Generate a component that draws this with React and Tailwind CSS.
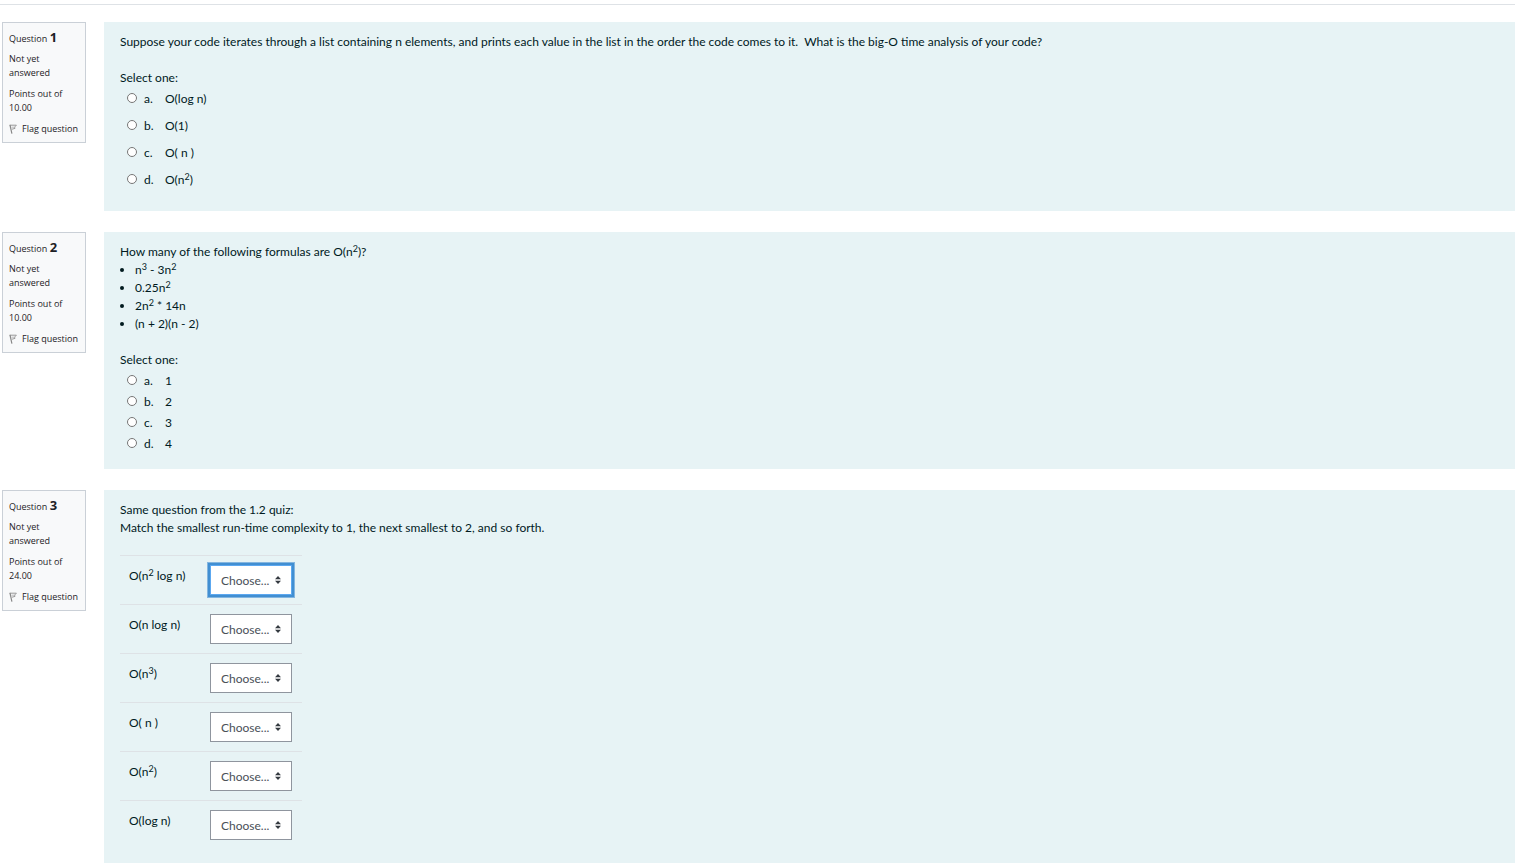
import clsx from "clsx";

const choices = [
  { letter: "a.", key: "a" },
  { letter: "b.", key: "b" },
  { letter: "c.", key: "c" },
  { letter: "d.", key: "d" },
];

function Sup({ children }) {
  return (
    <sup className="relative -top-1 align-baseline text-[9px] leading-none">
      {children}
    </sup>
  );
}

function FlagIcon() {
  return (
    <svg width="8" height="10" viewBox="0 0 8 10" fill="none" aria-hidden="true">
      <path d="M0.5 1.2 H7.4 L5.6 3 L6 4.4 L3 5.2" stroke="#999" />
      <path d="M1 1 L2.9 9.6" stroke="#888" strokeWidth="1.2" />
      <path d="M2.6 3.2 H5" stroke="#bbb" />
    </svg>
  );
}

function QuestionInfo({ number, points }) {
  return (
    <div className="w-[84px] shrink-0 border border-[#cad0d7] bg-[#f8f9fa] px-[6px] pt-[5px] pb-[6px] font-['Open_Sans','Noto_Sans',sans-serif] text-[9px] leading-[14px] text-[#1d2125]">
      <h3 className="mb-1 leading-[18px]">
        Question <span className="text-[13px] font-bold">{number}</span>
      </h3>
      <div className="mb-[7px]">
        Not yet
        <br />
        answered
      </div>
      <div className="mb-[7px]">
        Points out of
        <br />
        {points}
      </div>
      <button type="button" className="flex items-center gap-[5px] whitespace-nowrap">
        <FlagIcon />
        Flag question
      </button>
    </div>
  );
}

function Question({ number, points, children }) {
  return (
    <section className="mb-[21px] flex items-start gap-[18px] pl-[2px]">
      <QuestionInfo number={number} points={points} />
      <div className="min-w-0 flex-1 bg-[#e7f3f5] px-4 pt-[11px] text-[#001a1e]">
        {children}
      </div>
    </section>
  );
}

function Options({ name, answers, rowClass }) {
  return (
    <fieldset className="mt-[18px] mb-[13px]">
      <legend className="mb-[3px]">Select one:</legend>
      {choices.map(({ letter, key }, index) => (
        <div key={key} className={clsx("flex items-start pl-[7px]", rowClass)}>
          <input
            type="radio"
            id={`${name}-${key}`}
            name={name}
            className="mt-[3px] size-[10px] shrink-0 appearance-none rounded-full border border-[#767676] bg-white checked:bg-[#0f6fc5]"
          />
          <label htmlFor={`${name}-${key}`} className="ml-[7px] flex">
            <span className="w-[21px]">{letter}</span>
            <span>{answers[index]}</span>
          </label>
        </div>
      ))}
    </fieldset>
  );
}

function MatchRow({ id, label, active }) {
  return (
    <tr className="h-[49px] border-t border-[#dee2e6]">
      <td className="w-[90px] pt-[11px] pl-[9px] align-top">
        <label htmlFor={id}>{label}</label>
      </td>
      <td className="pt-[9px] pr-[10px] align-top">
        <div className="relative w-[82px]">
          <select
            id={id}
            className={clsx(
              "block h-[30px] w-full appearance-none border bg-white pt-[2px] pl-[10px] text-[#495057] outline-none",
              active
                ? "border-[#5ca8f0] shadow-[0_0_0_2px_#418fd2,0_0_0_3px_#84b6e0]"
                : "border-[#8f959e]"
            )}
          >
            <option>Choose...</option>
            <option>1</option>
            <option>2</option>
            <option>3</option>
            <option>4</option>
            <option>5</option>
            <option>6</option>
          </select>
          <svg
            className="pointer-events-none absolute top-[11px] right-[11px]"
            width="6"
            height="8"
            viewBox="0 0 6 8"
            fill="#343a40"
            aria-hidden="true"
          >
            <path d="M3 0 L6 3.3 H0 Z M3 8 L0 4.7 H6 Z" />
          </svg>
        </div>
      </td>
    </tr>
  );
}

export default function App() {
  const matches = [
    { id: "n2logn", label: <>O(n<Sup>2</Sup> log n)</>, active: true },
    { id: "nlogn", label: "O(n log n)" },
    { id: "n3", label: <>O(n<Sup>3</Sup>)</> },
    { id: "n", label: "O( n )" },
    { id: "n2", label: <>O(n<Sup>2</Sup>)</> },
    { id: "logn", label: "O(log n)" },
  ];

  return (
    <main className="overflow-hidden bg-white pt-1 font-['Lato','Open_Sans',sans-serif] text-[12px] leading-[18px]">
      <div className="mb-[17px] border-t border-[#dee2e6]" />

      <Question number={1} points="10.00">
        <p>
          Suppose your code iterates through a list containing n elements, and
          prints each value in the list in the order the code comes to it.
          &nbsp;What is the big-O time analysis of your code?
        </p>
        <Options
          name="q1"
          answers={["O(log n)", "O(1)", "O( n )", <>O(n<Sup>2</Sup>)</>]}
          rowClass="h-[27px]"
        />
      </Question>

      <Question number={2} points="10.00">
        <p>
          How many of the following formulas are O(n<Sup>2</Sup>)?
        </p>
        <ul className="list-disc pl-[15px]">
          <li>n<Sup>3</Sup> - 3n<Sup>2</Sup></li>
          <li>0.25n<Sup>2</Sup></li>
          <li>2n<Sup>2</Sup> * 14n</li>
          <li>(n + 2)(n - 2)</li>
        </ul>
        <Options name="q2" answers={["1", "2", "3", "4"]} rowClass="h-[21px]" />
      </Question>

      <Question number={3} points="24.00">
        <p>
          Same question from the 1.2 quiz:
          <br />
          Match the smallest run-time complexity to 1, the next smallest to 2,
          and so forth.
        </p>
        <table className="mt-[18px] mb-5 border-collapse">
          <tbody>
            {matches.map((match) => (
              <MatchRow key={match.id} {...match} />
            ))}
          </tbody>
        </table>
      </Question>
    </main>
  );
}
